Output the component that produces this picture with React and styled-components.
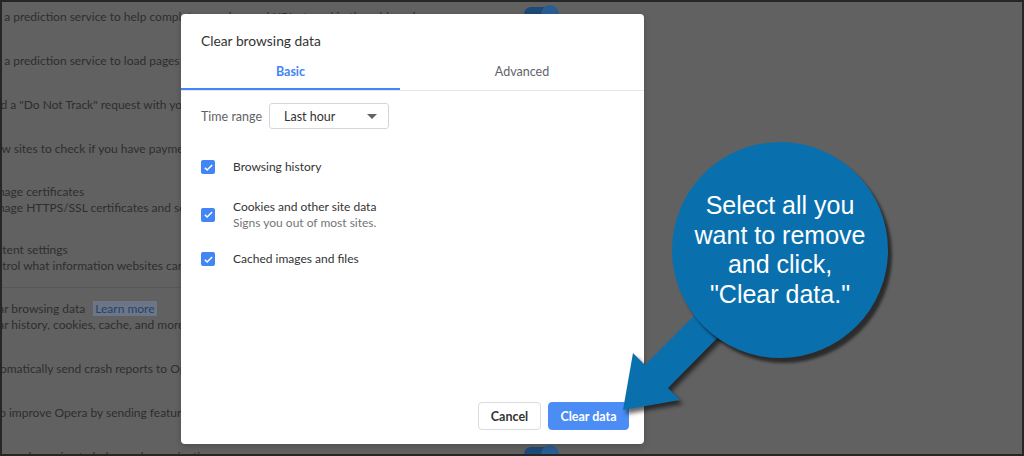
import React from "react";
import styled, { createGlobalStyle } from "styled-components";

const GlobalStyle = createGlobalStyle`
  html, body {
    margin: 0;
    padding: 0;
    background: #262626;
  }
  body {
    overflow: hidden;
  }
`;

const Frame = styled.div`
  width: 1024px;
  height: 456px;
  box-sizing: border-box;
  padding: 2px;
  background: #262626;
  display: flex;
`;

const Screen = styled.div`
  flex: 1;
  position: relative;
  overflow: hidden;
  background: #616161;
  font-family: Lato, "Noto Sans", sans-serif;
`;

// dimmed settings page behind the dialog
const SettingsList = styled.div`
  margin-top: -7px;
  margin-left: -21px;
  width: 577px;
  color: #2e2e2e;
  font-size: 12px;
`;

const SettingRow = styled.div`
  height: ${(p) => p.h || 44}px;
  display: flex;
  align-items: center;
  justify-content: space-between;
`;

const SettingText = styled.div`
  display: flex;
  flex-direction: column;
  line-height: 16px;
  white-space: nowrap;
`;

const Divider = styled.div`
  height: 1px;
  background: #575757;
  margin-left: 20px;
  width: 181px;
`;

const Link = styled.span`
  margin-left: 8px;
  padding: 0 2px;
  color: #24426c;
  background: #6c7686;
`;

const Toggle = styled.div`
  position: relative;
  width: 34px;
  height: 14px;
  border-radius: 7px;
  background: ${(p) => (p.on ? "#1d4a78" : "#505050")};
  margin-bottom: 6px;
  &::after {
    content: "";
    position: absolute;
    top: -2px;
    ${(p) => (p.on ? "right: -1px;" : "left: -1px;")}
    width: 18px;
    height: 18px;
    border-radius: 50%;
    background: ${(p) => (p.on ? "#2a5d93" : "#6e6e6e")};
  }
`;

const Dialog = styled.div`
  position: absolute;
  left: 179px;
  top: 12px;
  width: 463px;
  height: 430px;
  background: #fff;
  border-radius: 4px;
  display: flex;
  flex-direction: column;
  box-shadow: 0 2px 6px rgba(0, 0, 0, 0.2);
  color: #333;
`;

const Title = styled.div`
  padding: 17px 20px 0;
  font-size: 13.8px;
  line-height: 20px;
  color: #333;
`;

const TabBar = styled.div`
  display: flex;
  border-bottom: 1px solid #e6e6e6;
`;

const Tab = styled.div`
  flex: ${(p) => (p.w ? `0 0 ${p.w}px` : "1")};
  height: 33px;
  padding-top: 4px;
  line-height: 33px;
  text-align: center;
  font-size: 12.5px;
  font-weight: ${(p) => (p.active ? 700 : 400)};
  color: ${(p) => (p.active ? "#4285f4" : "#5f6368")};
  border-bottom: 2px solid ${(p) => (p.active ? "#4285f4" : "transparent")};
`;

const Body = styled.div`
  padding: 12px 20px 0;
  display: flex;
  flex-direction: column;
`;

const RangeRow = styled.div`
  display: flex;
  align-items: center;
  height: 26px;
  margin-bottom: 18px;
`;

const RangeLabel = styled.div`
  width: 68px;
  font-size: 12.5px;
  color: #5f6368;
`;

const Select = styled.div`
  box-sizing: border-box;
  width: 120px;
  height: 26px;
  border: 1px solid #d6d6d6;
  border-radius: 3px;
  display: flex;
  align-items: center;
  justify-content: space-between;
  padding: 0 11px 0 14px;
  font-size: 12.5px;
  color: #333;
`;

const Caret = styled.span`
  width: 0;
  height: 0;
  border-left: 5px solid transparent;
  border-right: 5px solid transparent;
  border-top: 5px solid #5f6368;
`;

const CheckRow = styled.div`
  height: ${(p) => p.h}px;
  display: flex;
  align-items: center;
  gap: 18px;
`;

const Box = styled.div`
  width: 14px;
  height: 14px;
  border-radius: 2px;
  background: #4285f4;
  display: flex;
  align-items: center;
  justify-content: center;
  flex-shrink: 0;
`;

const CheckText = styled.div`
  display: flex;
  flex-direction: column;
  font-size: 12px;
  line-height: 16px;
  color: #333;
`;

const SubText = styled.span`
  color: #757575;
`;

const Footer = styled.div`
  margin-top: auto;
  display: flex;
  justify-content: flex-end;
  gap: 7px;
  padding: 0 15px 14px 0;
`;

const Button = styled.button`
  box-sizing: border-box;
  width: ${(p) => p.w}px;
  height: 28px;
  border-radius: 4px;
  font-family: inherit;
  font-size: 12.5px;
  font-weight: 700;
  padding: 0;
  border: 1px solid ${(p) => (p.primary ? "#4b8df5" : "#dadce0")};
  background: ${(p) => (p.primary ? "#4b8df5" : "#fff")};
  color: ${(p) => (p.primary ? "#fff" : "#333")};
`;

// annotation on top of the screenshot
const ArrowLayer = styled.svg`
  position: absolute;
  left: -2px;
  top: -2px;
  width: 1024px;
  height: 456px;
  pointer-events: none;
  filter: drop-shadow(3px 4px 2px rgba(0, 0, 0, 0.6));
`;

const Bubble = styled.div`
  position: absolute;
  left: 670px;
  top: 140px;
  width: 216px;
  height: 216px;
  border-radius: 50%;
  background: #0a70ad;
  box-shadow: 4px 5px 3px rgba(0, 0, 0, 0.55);
  display: flex;
  align-items: center;
  justify-content: center;
  text-align: center;
  color: #fff;
  font-family: "Liberation Sans", Arial, sans-serif;
  font-size: 25px;
  line-height: 29.5px;
  box-sizing: border-box;
`;

const Check = () => (
  <svg width="11" height="11" viewBox="0 0 24 24">
    <path d="M4 12.5l5 5L20 6.5" fill="none" stroke="#fff" strokeWidth="3.4" />
  </svg>
);

const settings = [
  { lines: ["Use a prediction service to help complete searches and URLs typed in the address bar"], toggle: true },
  { lines: ["Use a prediction service to load pages more quickly"], toggle: true },
  { lines: ['Send a "Do Not Track" request with your browsing traffic'], toggle: false },
  { lines: ["Allow sites to check if you have payment methods saved"], toggle: true },
  { lines: ["Manage certificates", "Manage HTTPS/SSL certificates and settings"], h: 58 },
  { lines: ["Content settings", "Control what information websites can use and what content they can show you"], h: 58, divider: true },
  { lines: ["Clear browsing data", "Clear history, cookies, cache, and more"], h: 58, link: true },
  { lines: ["Automatically send crash reports to Opera"], toggle: true, h: 45 },
  { lines: ["Help improve Opera by sending feature usage information"], toggle: false },
  { lines: ["Use a web service to help resolve navigation errors"], toggle: true },
];

export default function App() {
  return (
    <Frame>
      <GlobalStyle />
      <Screen>
        <SettingsList>
          {settings.map((s, i) => (
            <React.Fragment key={i}>
              <SettingRow h={s.h}>
                <SettingText>
                  <span>
                    {s.lines[0]}
                    {s.link && <Link>Learn more</Link>}
                  </span>
                  {s.lines[1] && <span>{s.lines[1]}</span>}
                </SettingText>
                {s.toggle !== undefined && <Toggle on={s.toggle} />}
              </SettingRow>
              {s.divider && <Divider />}
            </React.Fragment>
          ))}
        </SettingsList>

        <Dialog>
          <Title>Clear browsing data</Title>
          <TabBar>
            <Tab active w={219}>Basic</Tab>
            <Tab>Advanced</Tab>
          </TabBar>
          <Body>
            <RangeRow>
              <RangeLabel>Time range</RangeLabel>
              <Select>
                Last hour
                <Caret />
              </Select>
            </RangeRow>
            <CheckRow h={40}>
              <Box><Check /></Box>
              <CheckText>Browsing history</CheckText>
            </CheckRow>
            <CheckRow h={55}>
              <Box><Check /></Box>
              <CheckText>
                <span>Cookies and other site data</span>
                <SubText>Signs you out of most sites.</SubText>
              </CheckText>
            </CheckRow>
            <CheckRow h={34}>
              <Box><Check /></Box>
              <CheckText>Cached images and files</CheckText>
            </CheckRow>
          </Body>
          <Footer>
            <Button w={63}>Cancel</Button>
            <Button w={81} primary>Clear data</Button>
          </Footer>
        </Dialog>

        <ArrowLayer viewBox="0 0 1024 456">
          <polygon
            points="623,410 633,353 645,365 716,294 738,317 668,388 680,400"
            fill="#0a70ad"
          />
        </ArrowLayer>
        <Bubble>
          Select all you
          <br />
          want to remove
          <br />
          and click,
          <br />
          "Clear data."
        </Bubble>
      </Screen>
    </Frame>
  );
}
